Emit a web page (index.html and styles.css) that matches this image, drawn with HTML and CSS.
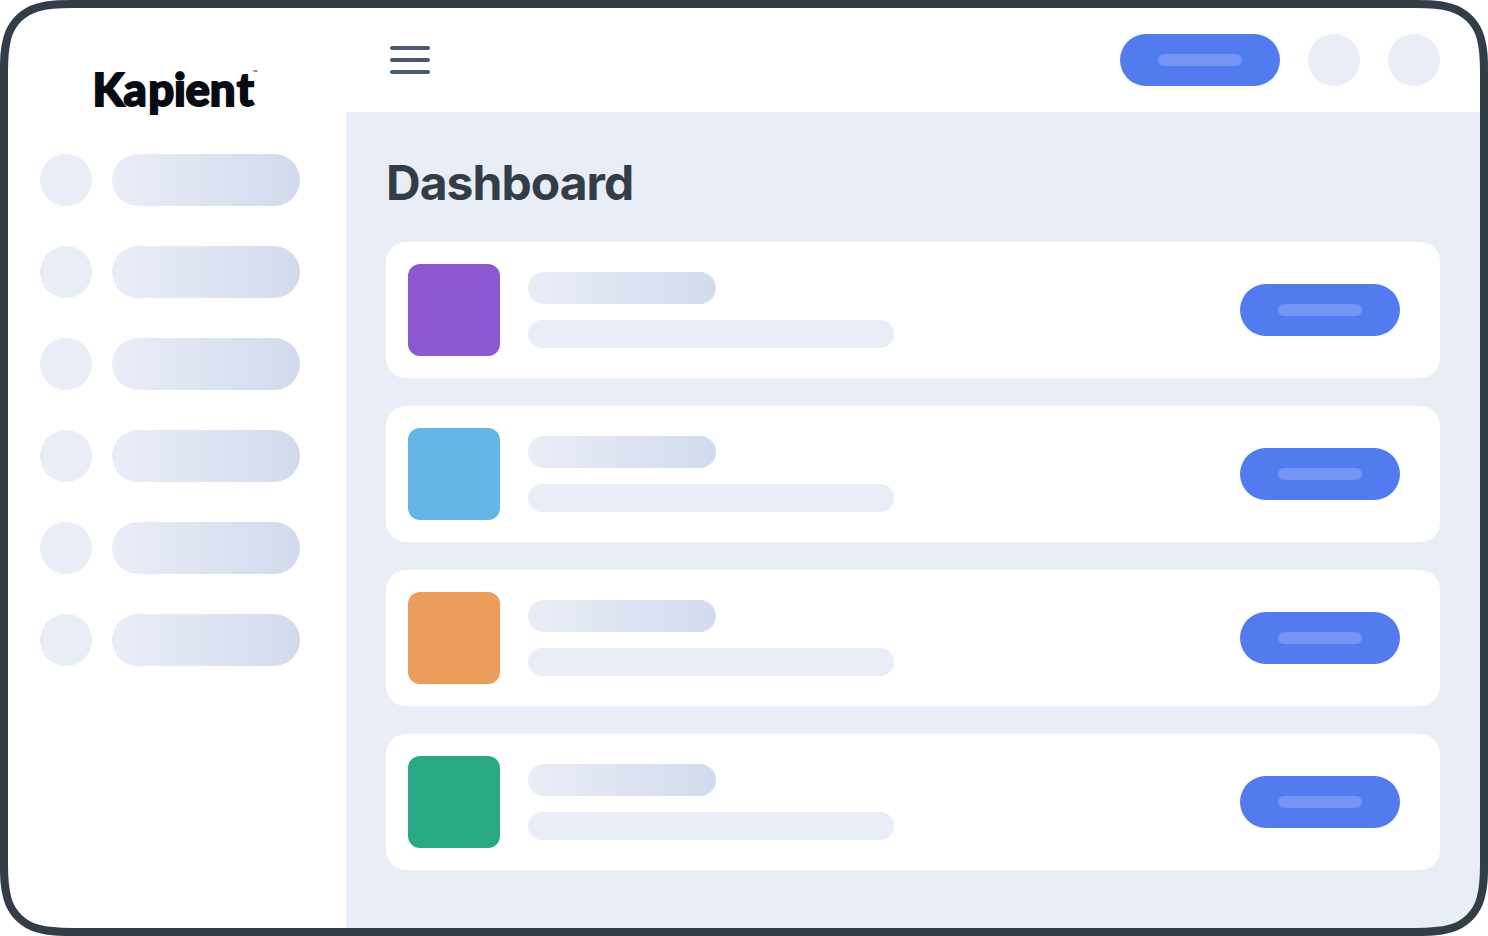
FILE: index.html
```html
<!DOCTYPE html>
<html lang="en">
<head>
<meta charset="utf-8">
<title>Kapient Dashboard</title>
<link rel="stylesheet" href="styles.css">
</head>
<body>
<div class="app">
  <aside class="sidebar">
    <svg class="logo" viewBox="0 0 180 50" role="img" aria-label="Kapient">
      <text class="logo-word" x="0.6 31.6 56.2 82 93.4 117.7 144.8" y="42.3">Kapient</text>
      <text class="logo-tm" x="160.6" y="12.2">™</text>
    </svg>
    <nav class="nav">
      <div class="nav-item"><span class="dot"></span><span class="pill"></span></div>
      <div class="nav-item"><span class="dot"></span><span class="pill"></span></div>
      <div class="nav-item"><span class="dot"></span><span class="pill"></span></div>
      <div class="nav-item"><span class="dot"></span><span class="pill"></span></div>
      <div class="nav-item"><span class="dot"></span><span class="pill"></span></div>
      <div class="nav-item"><span class="dot"></span><span class="pill"></span></div>
    </nav>
  </aside>
  <div class="content">
    <header class="topbar">
      <div class="menu"><span></span><span></span><span></span></div>
      <div class="actions"><div class="button"><span></span></div><span class="dot"></span><span class="dot"></span></div>
    </header>
    <main class="main">
      <h1 class="title">Dashboard</h1>
      <section class="list">
        <article class="card"><div class="thumb purple"></div><div class="lines"><div class="line-title"></div><div class="line-text"></div></div><div class="button"><span></span></div></article>
        <article class="card"><div class="thumb blue"></div><div class="lines"><div class="line-title"></div><div class="line-text"></div></div><div class="button"><span></span></div></article>
        <article class="card"><div class="thumb orange"></div><div class="lines"><div class="line-title"></div><div class="line-text"></div></div><div class="button"><span></span></div></article>
        <article class="card"><div class="thumb green"></div><div class="lines"><div class="line-title"></div><div class="line-text"></div></div><div class="button"><span></span></div></article>
      </section>
    </main>
  </div>
  <svg class="frame" viewBox="0 0 1488 936" aria-hidden="true">
    <path class="frame-outside" fill-rule="evenodd" d="M0 0H1488V936H0ZM72 4H1416c13 0 21.700 0 33.960 3.280a43.500 43.500 0 0 1 30.760 30.760c3.280 12.260 3.280 20.960 3.280 33.960V864c0 13 0 21.700-3.280 33.960a43.500 43.500 0 0 1-30.760 30.760c-12.260 3.280-20.960 3.280-33.960 3.280H72c-13 0-21.700 0-33.960-3.280a43.500 43.500 0 0 1-30.760-30.760c-3.280-12.260-3.280-20.960-3.280-33.960V72c0-13 0-21.700 3.280-33.960a43.500 43.500 0 0 1 30.760-30.760c12.260-3.280 20.960-3.280 33.960-3.280Z"/>
    <path class="frame-line" d="M72 4H1416c13 0 21.700 0 33.960 3.280a43.500 43.500 0 0 1 30.760 30.760c3.280 12.260 3.280 20.960 3.280 33.960V864c0 13 0 21.700-3.280 33.960a43.500 43.500 0 0 1-30.760 30.760c-12.260 3.280-20.960 3.280-33.960 3.280H72c-13 0-21.700 0-33.960-3.280a43.500 43.500 0 0 1-30.760-30.760c-3.280-12.260-3.280-20.960-3.280-33.960V72c0-13 0-21.700 3.280-33.960a43.500 43.500 0 0 1 30.760-30.760c12.260-3.280 20.960-3.280 33.960-3.280Z"/>
  </svg>
</div>
</body>
</html>
```
FILE: styles.css
```css
* { box-sizing: border-box; }
body { margin: 0; background: #fff; font-family: Inter, "Liberation Sans", sans-serif; }
.app { position: relative; display: flex; width: 1488px; height: 936px; overflow: hidden; background: #fff; }
.frame { position: absolute; inset: 0; width: 1488px; height: 936px; pointer-events: none; }
.frame-outside { fill: #fff; }
.frame-line { fill: none; stroke: #333d47; stroke-width: 8; }

.sidebar { width: 346px; padding: 64px 40px 0; }
.logo { display: block; width: 180px; height: 50px; margin-left: 52px; overflow: visible; }
.logo-word { font: 900 45.5px Lato, sans-serif; fill: #080b14; stroke: #080b14; stroke-width: 1.8; }
.logo-tm { font: 8px Inter, sans-serif; fill: #080b14; }
.nav { display: flex; flex-direction: column; gap: 40px; margin-top: 40px; }
.nav-item { display: flex; gap: 20px; }
.dot { width: 52px; height: 52px; border-radius: 50%; background: #e9edf6; }
.pill { width: 188px; height: 52px; border-radius: 26px; background: linear-gradient(90deg, #e9edf7, #d2daed); }

.content { flex: 1; display: flex; flex-direction: column; }
.topbar { height: 112px; padding: 8px 48px 0 44px; display: flex; align-items: center; justify-content: space-between; }
.menu { display: flex; flex-direction: column; gap: 8px; }
.menu span { width: 40px; height: 4px; border-radius: 2px; background: #4a5a6b; }
.actions { display: flex; gap: 28px; }
.button { display: flex; align-items: center; justify-content: center; width: 160px; height: 52px; border-radius: 26px; background: #527bf0; }
.button span { width: 84px; height: 12px; border-radius: 6px; background: #7495f3; }

.main { flex: 1; padding: 41px 48px 0 40px; background: #e9edf6; }
.title { margin: 0 0 29px; font-size: 48px; line-height: 60px; font-weight: 700; letter-spacing: -0.96px; color: #333d47; }
.list { display: flex; flex-direction: column; gap: 28px; }
.card { display: flex; align-items: center; height: 136px; padding: 0 40px 0 22px; border-radius: 20px; background: #fff; }
.thumb { width: 92px; height: 92px; border-radius: 12px; }
.purple { background: #8c57cf; }
.blue { background: #63b5e4; }
.orange { background: #eb9d5b; }
.green { background: #29a984; }
.lines { flex: 1; display: flex; flex-direction: column; gap: 16px; margin-left: 28px; }
.line-title { width: 188px; height: 32px; border-radius: 16px; background: linear-gradient(90deg, #e9edf7, #d2daed); }
.line-text { width: 366px; height: 28px; border-radius: 14px; background: #e9edf6; }
```
